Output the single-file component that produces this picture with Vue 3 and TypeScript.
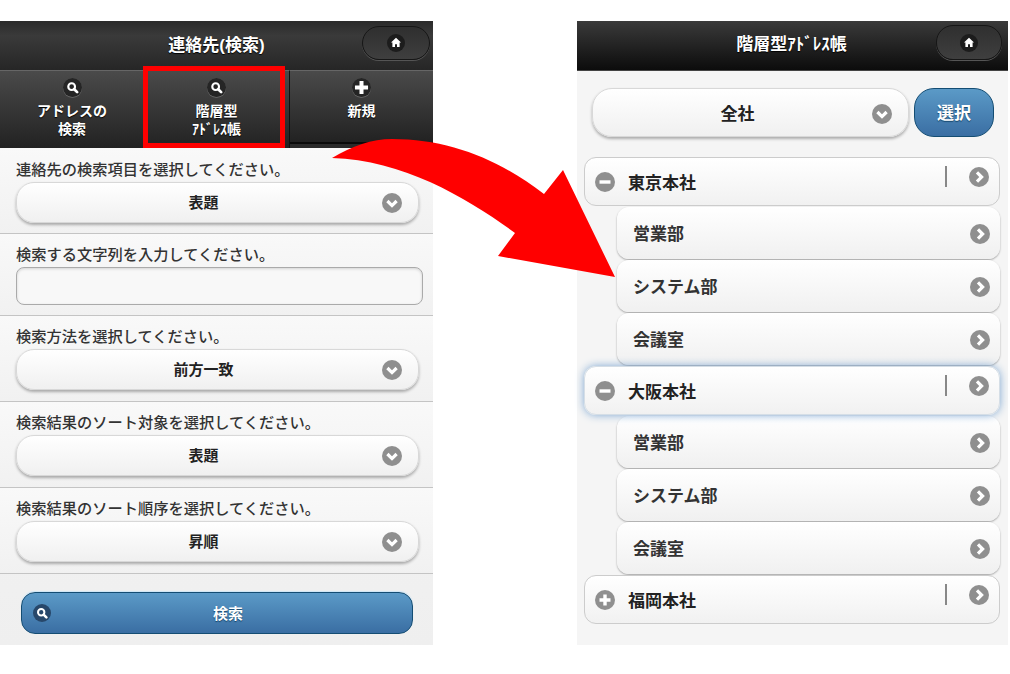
<script setup lang="ts">
interface Field { label: string; value?: string }
interface Branch { name: string; open: boolean; focus?: boolean; subs: string[] }

const tabs = [
  { icon: 'search', lines: ['アドレスの', '検索'], marked: false },
  { icon: 'search', lines: ['階層型', 'ｱﾄﾞﾚｽ帳'], marked: true },
  { icon: 'plus', lines: ['新規'], marked: false },
]
const fields: Field[] = [
  { label: '連絡先の検索項目を選択してください。', value: '表題' },
  { label: '検索する文字列を入力してください。' },
  { label: '検索方法を選択してください。', value: '前方一致' },
  { label: '検索結果のソート対象を選択してください。', value: '表題' },
  { label: '検索結果のソート順序を選択してください。', value: '昇順' },
]
const depts = ['営業部', 'システム部', '会議室']
const branches: Branch[] = [
  { name: '東京本社', open: true, subs: depts },
  { name: '大阪本社', open: true, focus: true, subs: depts },
  { name: '福岡本社', open: false, subs: [] },
]
</script>

<template>
  <div class="page">
    <svg class="defs" width="0" height="0" aria-hidden="true">
      <symbol id="i-search" viewBox="0 0 18 18">
        <circle cx="9" cy="9" r="9" fill="#252525" />
        <circle cx="8.2" cy="8.2" r="3.2" fill="none" stroke="#fff" stroke-width="2" />
        <path d="M10.6 10.6 13.4 13.4" stroke="#fff" stroke-width="2.6" stroke-linecap="round" />
      </symbol>
      <symbol id="i-search-blue" viewBox="0 0 18 18">
        <circle cx="9" cy="9" r="9" fill="#27476a" />
        <circle cx="8.2" cy="8.2" r="3.2" fill="none" stroke="#fff" stroke-width="2" />
        <path d="M10.6 10.6 13.4 13.4" stroke="#fff" stroke-width="2.6" stroke-linecap="round" />
      </symbol>
      <symbol id="i-plus" viewBox="0 0 18 18">
        <circle cx="9" cy="9" r="9" fill="#252525" />
        <path d="M9 2.8v12.4M2.8 9h12.4" stroke="#fff" stroke-width="3.8" />
      </symbol>
      <symbol id="i-home" viewBox="0 0 18 18">
        <circle cx="9" cy="9" r="9" fill="#1c1c1c" />
        <path d="M9 3.8 14 8.6H12.6V13H10V10.2H8V13H5.4V8.6H4Z" fill="#fff" />
      </symbol>
      <symbol id="i-down" viewBox="0 0 20 20">
        <circle cx="10" cy="10" r="10" fill="#8f8f8f" />
        <path d="M5.4 8 10 12.6 14.6 8" fill="none" stroke="#fff" stroke-width="3.2" />
      </symbol>
      <symbol id="i-right" viewBox="0 0 20 20">
        <circle cx="10" cy="10" r="10" fill="#8f8f8f" />
        <path d="M8 5.4 12.6 10 8 14.6" fill="none" stroke="#fff" stroke-width="3.2" />
      </symbol>
      <symbol id="i-minus" viewBox="0 0 20 20">
        <circle cx="10" cy="10" r="10" fill="#8f8f8f" />
        <path d="M4.5 10h11" stroke="#fff" stroke-width="3.4" />
      </symbol>
      <symbol id="i-add" viewBox="0 0 20 20">
        <circle cx="10" cy="10" r="10" fill="#8f8f8f" />
        <path d="M10 4.5v11M4.5 10h11" stroke="#fff" stroke-width="3.4" />
      </symbol>
    </svg>

    <section class="phone left">
      <header class="bar">
        <h1 class="title title-left">連絡先(検索)</h1>
        <button class="home"><svg class="i18"><use href="#i-home" /></svg></button>
      </header>
      <nav class="tabs">
        <div v-for="t in tabs" :key="t.lines[0]" class="tab" :class="{ marked: t.marked, last: t.icon === 'plus' }">
          <svg class="i18 tab-icon"><use :href="t.icon === 'plus' ? '#i-plus' : '#i-search'" /></svg>
          <span class="tab-text">
            <span v-for="l in t.lines" :key="l" class="tab-line">{{ l }}</span>
          </span>
          <i v-if="t.marked" class="redbox"></i>
        </div>
      </nav>
      <div class="form">
        <div v-for="f in fields" :key="f.label" class="field" :class="{ 'field-input': !f.value }">
          <label class="flabel">{{ f.label }}</label>
          <div v-if="f.value" class="select">
            <span class="sel-text">{{ f.value }}</span>
            <svg class="i20 sel-icon"><use href="#i-down" /></svg>
          </div>
          <div v-else class="input"></div>
        </div>
        <div class="submit-wrap">
          <button class="submit">
            <svg class="i18 sub-icon"><use href="#i-search-blue" /></svg>
            検索
          </button>
        </div>
      </div>
    </section>

    <section class="phone right">
      <header class="bar bar-right">
        <h1 class="title title-right">階層型ｱﾄﾞﾚｽ帳</h1>
        <button class="home home-right"><svg class="i18"><use href="#i-home" /></svg></button>
      </header>
      <div class="tree">
        <div class="toolbar">
          <div class="select select-tree">
            <span class="sel-text">全社</span>
            <svg class="i20 sel-icon"><use href="#i-down" /></svg>
          </div>
          <button class="pick">選択</button>
        </div>
        <ul class="list">
          <template v-for="b in branches" :key="b.name">
            <li class="branch" :class="{ focus: b.focus }">
              <svg class="i20"><use :href="b.open ? '#i-minus' : '#i-add'" /></svg>
              <span class="bname">{{ b.name }}</span>
              <i class="sep"></i>
              <svg class="i20 go"><use href="#i-right" /></svg>
            </li>
            <li v-for="s in b.subs" :key="b.name + s" class="sub">
              <span class="sub-name">{{ s }}</span>
              <svg class="i20 sub-go"><use href="#i-right" /></svg>
            </li>
          </template>
        </ul>
      </div>
    </section>

    <svg class="arrow" width="1010" height="674" viewBox="0 0 1010 674" aria-hidden="true">
      <path d="M332 158C352 146 372 139 392 139C450 139 500 160 544 194L563 170L615 277L498 256L515 233C470 200 405 160 332 158Z" fill="#ff0000" />
    </svg>
  </div>
</template>

<style>
html, body { margin: 0; background: #fff; }
</style>

<style scoped>
.page {
  position: relative;
  width: 1010px;
  height: 674px;
  padding-top: 21px;
  box-sizing: border-box;
  display: flex;
  overflow: hidden;
  background: #fff;
  font-family: "Liberation Sans", "Noto Sans CJK JP", sans-serif;
}
.defs { position: absolute; }
.phone { height: 624px; display: flex; flex-direction: column; background: #f3f3f3; }
.left { width: 433px; }
.right { width: 431px; margin-left: 144px; }
.bar {
  height: 49px;
  flex: none;
  display: flex;
  align-items: center;
  justify-content: center;
  position: relative;
  background: linear-gradient(#2a2a2a, #3a3a3a 30%, #262626);
}
.bar-right {
  height: 50px;
  background: linear-gradient(#3a3a3a, #0c0c0c);
  border-bottom: 1px solid #444;
  box-sizing: border-box;
}
.title {
  margin: 0;
  color: #fff;
  font-weight: 700;
  text-shadow: 0 1px 1px #000;
}
.title-left { font-size: 17px; padding-bottom: 4px; }
.title-right { font-size: 17px; padding-right: 2px; padding-bottom: 6px; }
.home {
  position: absolute;
  left: 362px;
  top: 5px;
  width: 68px;
  height: 34px;
  padding: 0;
  display: flex;
  align-items: center;
  justify-content: center;
  border: 1px solid #161616;
  border-radius: 17px;
  background: linear-gradient(#2f2f2f, #3f3f3f);
  box-shadow: 0 1px 0 #555;
}
.home-right { left: 359px; top: 4px; width: 66px; height: 35px; }
.i18 { width: 18px; height: 18px; flex: none; display: block; }
.i20 { width: 20px; height: 20px; flex: none; display: block; }
.tabs {
  height: 78px;
  flex: none;
  display: grid;
  grid-template-columns: 144px 145px 144px;
}
.tab {
  position: relative;
  display: flex;
  flex-direction: column;
  align-items: center;
  padding-top: 7px;
  box-sizing: border-box;
  border-top: 1px solid #666;
  background: linear-gradient(#4a4a4a, #222);
  color: #fff;
  font-weight: 700;
}
.tab.last {
  border-left: 1px solid #111;
  background: linear-gradient(#4a4a4a, #222 92%, #0a0a0a 92%, #0a0a0a 95%, #2a2a2a 95%);
}
.tab-icon { width: 19px; height: 19px; box-shadow: 0 1px 0 rgba(255, 255, 255, 0.2); border-radius: 50%; }
.tab-text {
  display: flex;
  flex-direction: column;
  align-items: center;
  margin-top: 5px;
  font-size: 14px;
  line-height: 18px;
  text-shadow: 0 1px 1px #000;
}
.redbox {
  position: absolute;
  left: -1px;
  top: -5px;
  width: 142px;
  height: 82px;
  box-sizing: border-box;
  border: 5px solid #ff0000;
}
.form { flex: 1; display: flex; flex-direction: column; background: linear-gradient(#f8f8f8, #efefef); }
.field {
  padding: 12px 14px 11px 16px;
  border-bottom: 1px solid #c4c4c4;
  background: linear-gradient(#f9f9f9, #f1f1f1);
}
.field:first-child { padding-top: 13px; padding-bottom: 10px; }
.field-input { padding-bottom: 10px; }
.flabel {
  display: block;
  font-size: 15.25px;
  font-weight: 500;
  line-height: 18px;
  color: #333;
  margin-bottom: 3px;
}
.select {
  position: relative;
  height: 41px;
  display: flex;
  align-items: center;
  justify-content: center;
  padding: 0 28px 3px 0;
  box-sizing: border-box;
  border: 1px solid #d8d8d8;
  border-radius: 18px;
  background: linear-gradient(#fff, #f0f0f0);
  box-shadow: 0 2px 3px rgba(0, 0, 0, 0.3);
  font-size: 15px;
  font-weight: 700;
  color: #222;
}
.sel-icon { position: absolute; right: 16px; top: 50%; margin-top: -10px; }
.input {
  height: 38px;
  box-sizing: border-box;
  margin-right: -4px;
  border: 1px solid #aaa;
  border-radius: 8px;
  background: #f8f8f8;
  box-shadow: inset 0 1px 3px rgba(0, 0, 0, 0.15);
}
.submit-wrap { padding: 18px 20px 0 21px; }
.submit {
  position: relative;
  width: 100%;
  height: 42px;
  padding: 0 0 2px 22px;
  border: 1px solid #144d73;
  border-radius: 14px;
  background: linear-gradient(#5b9ac7, #3a6ea3);
  color: #fff;
  font: 700 15px "Liberation Sans", "Noto Sans CJK JP", sans-serif;
  text-shadow: 0 1px 1px #14456a;
  box-shadow: 0 -1px 1px #cfe6f5;
}
.sub-icon { position: absolute; left: 11px; top: 11px; }
.tree { flex: 1; padding: 17px 8px 0 7px; background: #f5f5f5; }
.toolbar { display: flex; gap: 5px; padding: 0 6px 0 8px; }
.select-tree { flex: 1; height: 49px; border-radius: 20px; font-size: 17px; padding: 0 26px 0 0; }
.select-tree .sel-icon { margin-top: -9px; }
.pick {
  width: 80px;
  height: 49px;
  padding: 0 0 3px;
  border: 1px solid #144d73;
  border-radius: 20px;
  background: linear-gradient(#5b9ac7, #3a6ea3);
  color: #fff;
  font: 700 17px "Liberation Sans", "Noto Sans CJK JP", sans-serif;
  text-shadow: 0 1px 1px #14456a;
}
.list { list-style: none; margin: 20px 0 0; padding: 0; display: flex; flex-direction: column; gap: 1px; }
.branch {
  position: relative;
  height: 49px;
  display: flex;
  align-items: center;
  padding: 0 10px;
  box-sizing: border-box;
  border: 1px solid #ccc;
  border-radius: 12px;
  background: linear-gradient(#fff, #f1f1f1);
  font-size: 17px;
  font-weight: 700;
  color: #222;
}
.branch.focus { border-color: #d5dee6; box-shadow: 0 0 9px #7fa8d3; z-index: 1; }
.bname { margin-left: 13px; flex: 1; }
.sep { position: absolute; right: 52px; top: 8px; width: 2px; height: 21px; background: #888; }
.go { position: absolute; right: 10px; top: 9px; }
.sub {
  height: 52px;
  margin-left: 33px;
  display: flex;
  align-items: center;
  justify-content: space-between;
  padding: 0 10px 0 16px;
  box-sizing: border-box;
  border-radius: 12px;
  background: linear-gradient(#fff, #f0f0f0);
  box-shadow: 0 1px 2px rgba(0, 0, 0, 0.35);
  font-size: 17px;
  font-weight: 700;
  color: #333;
}
.sub-go { margin-top: 2px; }
.sub-name { margin-top: -1px; }
.arrow { position: absolute; left: 0; top: 0; pointer-events: none; }
</style>
